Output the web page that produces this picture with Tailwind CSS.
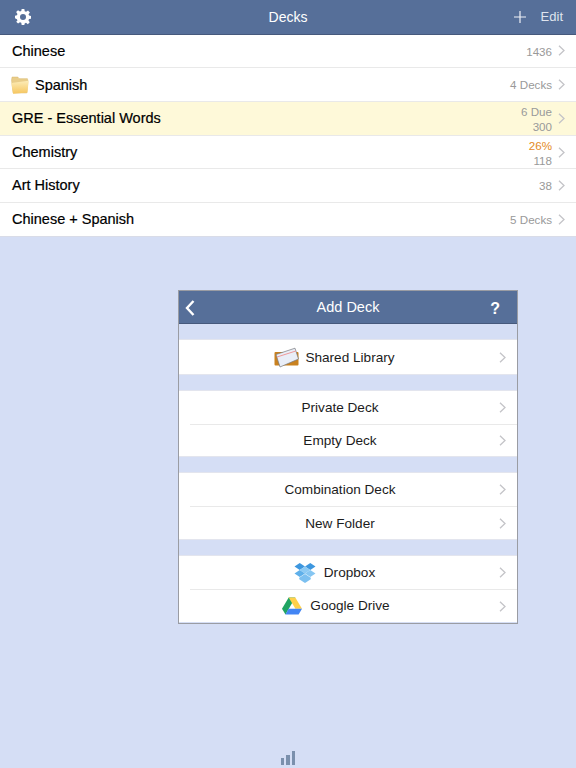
<!DOCTYPE html>
<html lang="en">
<head>
<meta charset="UTF-8">
<title>Decks</title>
<script src="https://cdn.jsdelivr.net/npm/@tailwindcss/browser@4"></script>
</head>
<body class="font-['Liberation_Sans',Arial,sans-serif]">
<div class="relative w-[576px] h-[768px] overflow-hidden bg-[#d5def5] flex flex-col">
  <!-- Top bar -->
  <header class="relative h-[35px] shrink-0 flex items-center justify-between bg-[#566f99] border-b border-[#46597c] text-white">
    <svg class="ml-[15px]" width="16" height="16" viewBox="0 0 24 24" fill="#fff"><path fill-rule="evenodd" d="M10 0h4l.6 3.400 2 .8L19.500 2.300l2.800 2.800-2 2.800.8 2 3 .6v4l-3.100.6-.8 2 1.900 2.800-2.800 2.800-2.800-1.900-2 .8L14 24h-4l-.6-3.200-2-.8-2.800 1.900-2.800-2.800L3.700 17.300l-.8-2L0 14v-4l2.900-.6.8-2-2-2.800 2.800-2.800 2.900 1.900 2-.8zM12 7.500a4.500 4.500 0 1 0 0 9 4.500 4.500 0 0 0 0-9z"/></svg>
    <span class="absolute left-0 right-0 text-center text-[14px] pointer-events-none">Decks</span>
    <div class="flex items-center mr-[13px]">
      <svg width="12" height="12" viewBox="0 0 12 12" stroke="#eef1f7" stroke-width="1.200"><path d="M6 0v12M0 6h12"/></svg>
      <span class="ml-[15px] text-[13px] text-[#dfe4ee]">Edit</span>
    </div>
  </header>

  <!-- Deck list -->
  <ul class="shrink-0 text-black text-[14.500px] [-webkit-text-stroke:0.2px_#000]">
    <li class="h-[33px] flex items-center justify-between bg-white border-b border-[#e9e9e9] pl-3 pr-[11px]">
      <span class="pt-px">Chinese</span>
      <div class="flex items-center gap-[6px] text-[11.600px] text-[#999] [-webkit-text-stroke:0]"><span class="pt-px">1436</span><svg width="7" height="11" viewBox="0 0 7 11" fill="none" stroke="#c4c4c8" stroke-width="1.300"><path d="M1 .7 6 5.500 1 10.300"/></svg></div>
    </li>
    <li class="h-[34px] flex items-center justify-between bg-white border-b border-[#e9e9e9] pl-[11px] pr-[11px]">
      <span class="flex items-center gap-[6px]">
        <svg width="18" height="18" viewBox="0 0 17 17"><defs><linearGradient id="fold" x1="0" y1="0" x2="0" y2="1"><stop offset="0" stop-color="#fcecb8"/><stop offset="1" stop-color="#f6c65f"/></linearGradient></defs><path d="M.5 4 1 1h5.500L7.500 2.500h8l.5 2-1 11.500H2z" fill="#e9cd8a" stroke="#d9b86c" stroke-width=".5"/><path d="M.3 6.500 16.700 4.500 15.500 15.500 2 16.700z" fill="url(#fold)"/></svg>
        <span class="pt-[2px]">Spanish</span>
      </span>
      <div class="flex items-center gap-[6px] text-[11.600px] text-[#999] [-webkit-text-stroke:0]"><span class="pt-px">4 Decks</span><svg width="7" height="11" viewBox="0 0 7 11" fill="none" stroke="#c4c4c8" stroke-width="1.300"><path d="M1 .7 6 5.500 1 10.300"/></svg></div>
    </li>
    <li class="h-[34px] flex items-center justify-between bg-[#fef9d9] border-b border-[#e9e9e9] pl-3 pr-[11px]">
      <span class="pt-px">GRE - Essential Words</span>
      <div class="flex items-center gap-[6px] text-[11.600px] text-[#999] [-webkit-text-stroke:0]"><div class="pt-px text-right leading-[15px]"><div>6 Due</div><div>300</div></div><svg width="7" height="11" viewBox="0 0 7 11" fill="none" stroke="#c4c4c8" stroke-width="1.300"><path d="M1 .7 6 5.500 1 10.300"/></svg></div>
    </li>
    <li class="h-[33px] flex items-center justify-between bg-white border-b border-[#e9e9e9] pl-3 pr-[11px]">
      <span class="pt-px">Chemistry</span>
      <div class="flex items-center gap-[6px] text-[11.600px] text-[#999] [-webkit-text-stroke:0]"><div class="pt-px text-right leading-[15px]"><div class="text-[#e48a26]">26%</div><div>118</div></div><svg width="7" height="11" viewBox="0 0 7 11" fill="none" stroke="#c4c4c8" stroke-width="1.300"><path d="M1 .7 6 5.500 1 10.300"/></svg></div>
    </li>
    <li class="h-[34px] flex items-center justify-between bg-white border-b border-[#e9e9e9] pl-3 pr-[11px]">
      <span class="pt-px">Art History</span>
      <div class="flex items-center gap-[6px] text-[11.600px] text-[#999] [-webkit-text-stroke:0]"><span class="pt-px">38</span><svg width="7" height="11" viewBox="0 0 7 11" fill="none" stroke="#c4c4c8" stroke-width="1.300"><path d="M1 .7 6 5.500 1 10.300"/></svg></div>
    </li>
    <li class="h-[34px] flex items-center justify-between bg-white border-b border-[#d9dce8] pl-3 pr-[11px]">
      <span class="pt-px">Chinese + Spanish</span>
      <div class="flex items-center gap-[6px] text-[11.600px] text-[#999] [-webkit-text-stroke:0]"><span class="pt-px">5 Decks</span><svg width="7" height="11" viewBox="0 0 7 11" fill="none" stroke="#c4c4c8" stroke-width="1.300"><path d="M1 .7 6 5.500 1 10.300"/></svg></div>
    </li>
  </ul>

  <!-- Add Deck popover -->
  <div class="absolute left-[178px] top-[290px] w-[340px] h-[334px] border border-[#9a9ca3] bg-[#d5def5] text-[13.600px] text-[#1c1c1c]">
    <div class="relative h-[33px] flex items-center justify-between bg-[#566f99] border-b border-[#46597c] text-white px-[6px]">
      <svg class="mt-px" width="10" height="16" viewBox="0 0 10 16" fill="none" stroke="#fff" stroke-width="2.400"><path d="M8.500 1 2 8l6.500 7"/></svg>
      <span class="absolute left-0 right-0 text-center text-[14.500px] pt-[2px]">Add Deck</span>
      <span class="mr-[11px] text-[16px] font-bold pt-[3px]">?</span>
    </div>

    <div class="mt-[15px] bg-white border-y border-[#e3e5ee]">
      <div class="relative h-[34px] flex items-center justify-center gap-[6px] pr-[27px]">
        <svg width="25" height="21" viewBox="0 0 25 21"><rect x="0.500" y="5" width="24" height="13.500" rx="1" fill="#c9811f"/><path d="M2 7.500 21 1.200 24.500 12 6 20z" fill="#e9eef8" stroke="#77787c" stroke-width=".7"/><path d="M3 10 21.800 4" stroke="#ee8f8f" stroke-width=".9"/></svg>
        <span class="pt-[2px]">Shared Library</span>
        <svg class="absolute right-[11px] mt-px" width="7" height="11" viewBox="0 0 7 11" fill="none" stroke="#c4c4c8" stroke-width="1.300"><path d="M1 .7 6 5.500 1 10.300"/></svg>
      </div>
    </div>

    <div class="mt-[15px] bg-white border-y border-[#e3e5ee]">
      <div class="relative h-[33px] flex items-center justify-center pr-[16px]">
        <span class="pt-[2px]">Private Deck</span>
        <svg class="absolute right-[11px]" width="7" height="11" viewBox="0 0 7 11" fill="none" stroke="#c4c4c8" stroke-width="1.300"><path d="M1 .7 6 5.500 1 10.300"/></svg>
      </div>
      <div class="relative h-[32px] ml-[11px] flex items-center justify-center pr-[27px] border-t border-[#e9e9e9]">
        <span class="pt-[2px]">Empty Deck</span>
        <svg class="absolute right-[11px]" width="7" height="11" viewBox="0 0 7 11" fill="none" stroke="#c4c4c8" stroke-width="1.300"><path d="M1 .7 6 5.500 1 10.300"/></svg>
      </div>
    </div>

    <div class="mt-[15px] bg-white border-y border-[#e3e5ee]">
      <div class="relative h-[33px] flex items-center justify-center pr-[16px]">
        <span class="pt-[2px]">Combination Deck</span>
        <svg class="absolute right-[11px]" width="7" height="11" viewBox="0 0 7 11" fill="none" stroke="#c4c4c8" stroke-width="1.300"><path d="M1 .7 6 5.500 1 10.300"/></svg>
      </div>
      <div class="relative h-[33px] ml-[11px] flex items-center justify-center pr-[27px] border-t border-[#e9e9e9]">
        <span class="pt-[2px]">New Folder</span>
        <svg class="absolute right-[11px]" width="7" height="11" viewBox="0 0 7 11" fill="none" stroke="#c4c4c8" stroke-width="1.300"><path d="M1 .7 6 5.500 1 10.300"/></svg>
      </div>
    </div>

    <div class="mt-[15px] bg-white border-t border-[#e3e5ee]">
      <div class="relative h-[33px] flex items-center justify-center gap-[8px] pr-[27px]">
        <svg width="22" height="20" viewBox="0 0 21 19"><path d="M5.500 0 10.500 3.300 5.500 6.600.5 3.300z" fill="#3d97df"/><path d="M15.500 0 20.500 3.300 15.500 6.600 10.500 3.300z" fill="#3d97df"/><path d="M5.500 6.600 10.500 3.300 15.500 6.600 10.500 9.900z" fill="#8ccaf4"/><path d="M5.500 6.600 10.500 9.900 5.500 13.200.5 9.900z" fill="#5fb0ea"/><path d="M15.500 6.600 20.500 9.900 15.500 13.200 10.500 9.900z" fill="#86c6f2"/><path d="M5 14 10.500 10.500 16 14v1.500L10.500 19 5 15.500z" fill="#7cc0f0"/></svg>
        <span class="pt-[2px]">Dropbox</span>
        <svg class="absolute right-[11px]" width="7" height="11" viewBox="0 0 7 11" fill="none" stroke="#c4c4c8" stroke-width="1.300"><path d="M1 .7 6 5.500 1 10.300"/></svg>
      </div>
      <div class="relative h-[33px] ml-[11px] flex items-center justify-center gap-[8px] pr-[35px] border-t border-[#e9e9e9]">
        <svg width="20" height="18" viewBox="0 0 20 18"><path d="M6.700.5h6.600L6.800 11.800 3.500 17.500 0 11.700z" fill="#1fa463"/><path d="M6.700.5h6.600L20 11.700h-6.600z" fill="#ffd04b"/><path d="M6.600 11.700H20l-3.400 5.800H3.400z" fill="#4285f4"/></svg>
        <span>Google Drive</span>
        <svg class="absolute right-[11px]" width="7" height="11" viewBox="0 0 7 11" fill="none" stroke="#c4c4c8" stroke-width="1.300"><path d="M1 .7 6 5.500 1 10.300"/></svg>
      </div>
    </div>
  </div>

  <!-- Stats icon -->
  <div class="mt-auto mb-[3px] flex items-end justify-center gap-[2px]">
    <div class="w-[3px] h-[7px] bg-[#7b90ad]"></div>
    <div class="w-[4px] h-[10px] bg-[#7b90ad]"></div>
    <div class="w-[3px] h-[14px] bg-[#7b90ad]"></div>
  </div>
</div>
</body>
</html>
